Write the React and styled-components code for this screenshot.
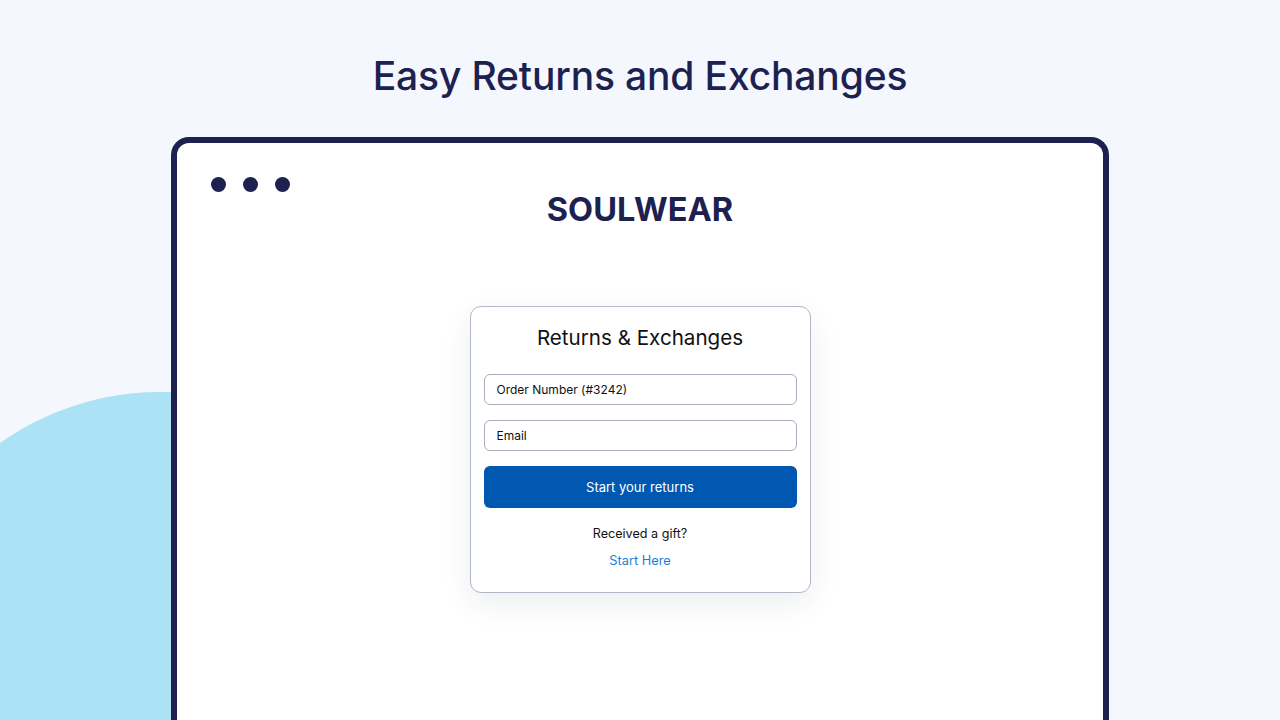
import React from "react";
import styled, { createGlobalStyle } from "styled-components";

const Global = createGlobalStyle`
  html, body { margin: 0; padding: 0; }
  body {
    background: #f4f7fe;
    font-family: Inter, "Noto Sans", sans-serif;
    overflow: hidden;
  }
`;

const Page = styled.div`
  position: relative;
  width: 1280px;
  height: 720px;
  overflow: hidden;
  display: flex;
  flex-direction: column;
  align-items: center;
`;

const Blob = styled.div`
  position: absolute;
  left: -116px;
  top: 392px;
  width: 552px;
  height: 552px;
  border-radius: 50%;
  background: #abe2f5;
  z-index: 0;
`;

const Heading = styled.h1`
  margin: 52px 0 0;
  font-size: 39px;
  line-height: 47px;
  font-weight: 500;
  color: #1c2150;
  letter-spacing: -0.15px;
  position: relative;
  z-index: 1;
`;

const Frame = styled.div`
  position: relative;
  z-index: 1;
  box-sizing: border-box;
  margin-top: 38px;
  width: 938px;
  flex: 1;
  min-height: 640px;
  background: #fff;
  border: 6px solid #1c2150;
  border-bottom: none;
  border-radius: 18px 18px 0 0;
  padding: 34px 34px 0;
  display: flex;
  flex-direction: column;
  align-items: center;
`;

const Dots = styled.div`
  align-self: flex-start;
  display: flex;
  gap: 17px;
`;

const Dot = styled.span`
  width: 15px;
  height: 15px;
  border-radius: 50%;
  background: #1c2150;
`;

const Logo = styled.div`
  margin-top: 1px;
  font-size: 32.5px;
  line-height: 34px;
  font-weight: 700;
  color: #1c2150;
  letter-spacing: 0;
`;

const Card = styled.div`
  box-sizing: border-box;
  margin-top: 79px;
  width: 341px;
  border: 1px solid #b3b8c6;
  border-radius: 11px;
  background: #fff;
  box-shadow: 0 10px 30px rgba(30, 40, 80, 0.08);
  padding: 18px 13px 23px;
  display: flex;
  flex-direction: column;
  align-items: stretch;
`;

const CardTitle = styled.h2`
  margin: 0 0 23px;
  text-align: center;
  font-size: 20.6px;
  line-height: 26px;
  font-weight: 400;
  color: #111;
`;

const Field = styled.div`
  box-sizing: border-box;
  height: 31px;
  border: 1px solid #a9aebb;
  border-radius: 6px;
  padding: 0 12px;
  display: flex;
  align-items: center;
  font-size: 12px;
  color: #111;
  margin-bottom: 15px;
`;

const Button = styled.button`
  height: 42px;
  border: none;
  border-radius: 6px;
  background: #0058b0;
  color: #fff;
  font-family: Inter, sans-serif;
  font-size: 13px;
  cursor: pointer;
`;

const Gift = styled.div`
  margin-top: 17px;
  text-align: center;
  font-size: 12.6px;
  line-height: 17px;
  color: #111;
`;

const Link = styled.a`
  margin-top: 10px;
  text-align: center;
  font-size: 12.8px;
  line-height: 17px;
  color: #1a7fd6;
  text-decoration: none;
`;

export default function App() {
  return (
    <>
      <Global />
      <Page>
        <Blob />
        <Heading>Easy Returns and Exchanges</Heading>
        <Frame>
          <Dots>
            <Dot />
            <Dot />
            <Dot />
          </Dots>
          <Logo>SOULWEAR</Logo>
          <Card>
            <CardTitle>Returns &amp; Exchanges</CardTitle>
            <Field>Order Number (#3242)</Field>
            <Field>Email</Field>
            <Button>Start your returns</Button>
            <Gift>Received a gift?</Gift>
            <Link href="#">Start Here</Link>
          </Card>
        </Frame>
      </Page>
    </>
  );
}
